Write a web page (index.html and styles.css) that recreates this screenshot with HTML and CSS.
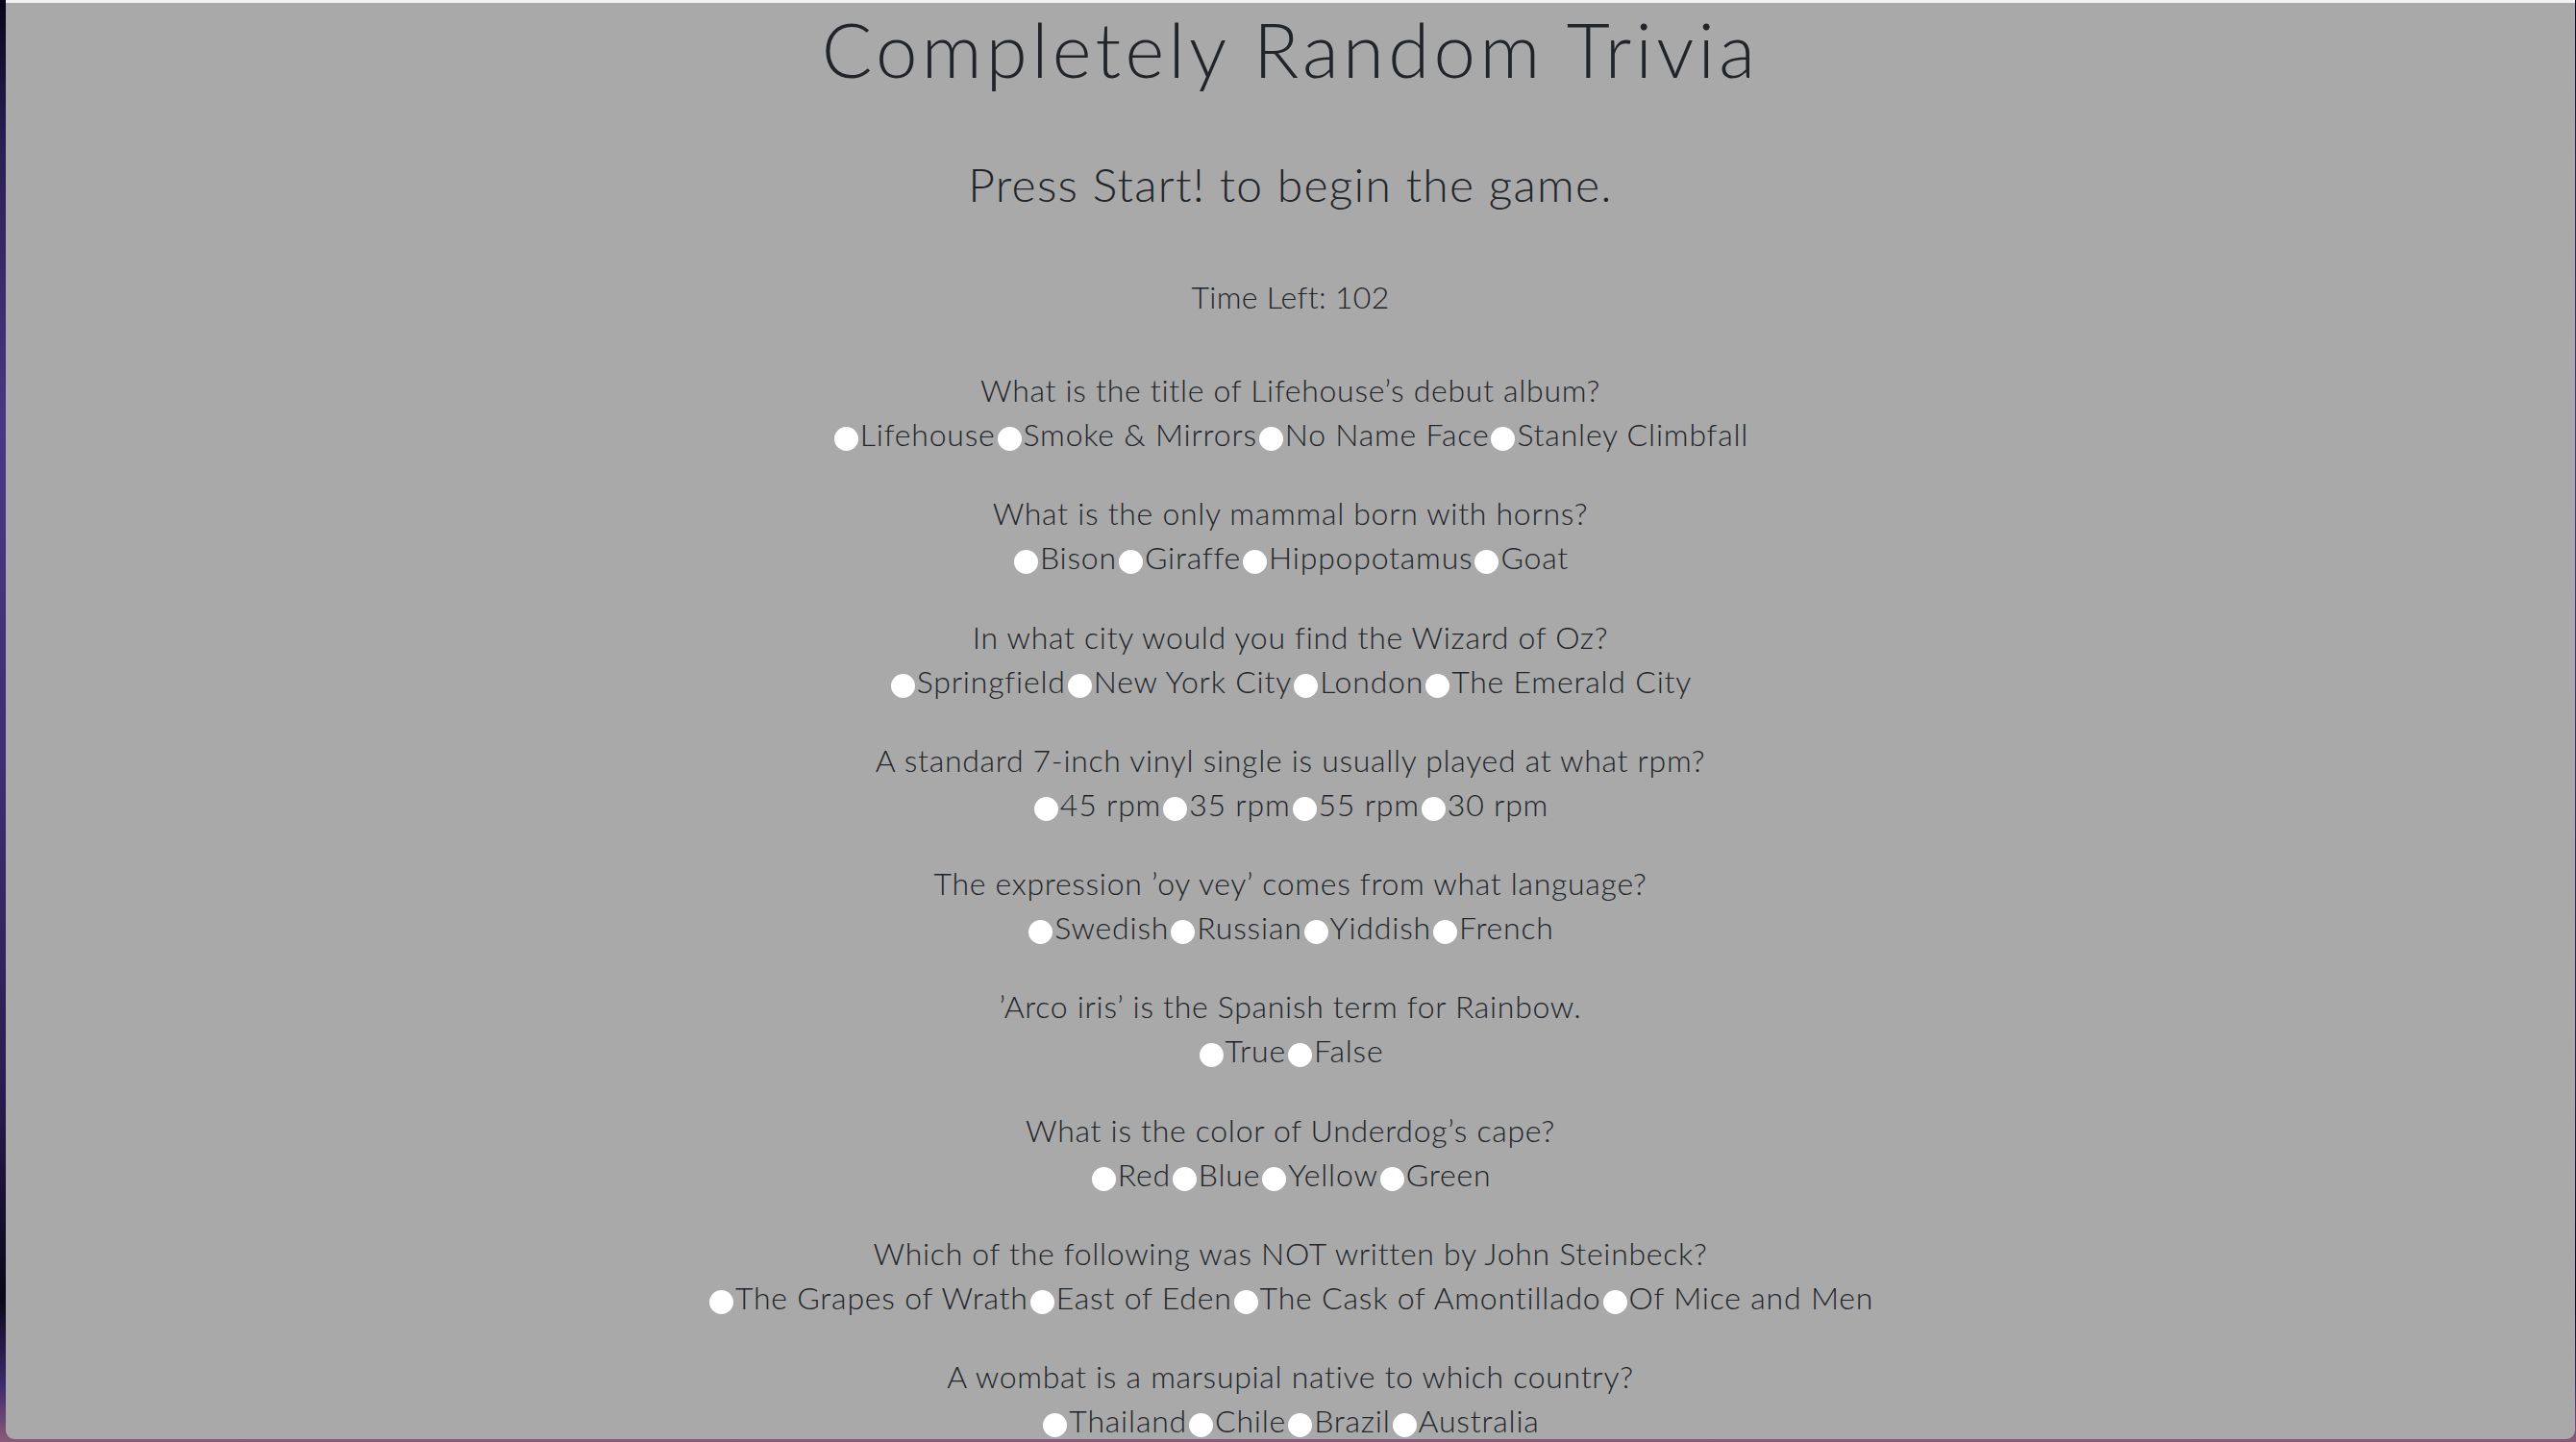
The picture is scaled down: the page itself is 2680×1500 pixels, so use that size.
FILE: index.html
```html
<!DOCTYPE html>
<html lang="en">
<head>
<meta charset="utf-8">
<title>Completely Random Trivia</title>
<link rel="stylesheet" href="styles.css">
</head>
<body>
<div class="backdrop">
  <main class="panel">
    <h1 class="title">Completely Random Trivia</h1>
    <h2 class="status">Press Start! to begin the game.</h2>
    <p class="timer">Time Left: 102</p>

    <div class="question">
      <p class="q-text">What is the title of Lifehouse’s debut album?</p>
      <div class="answers"><input type="radio" name="q1"><span>Lifehouse</span><input type="radio" name="q1"><span>Smoke &amp; Mirrors</span><input type="radio" name="q1"><span>No Name Face</span><input type="radio" name="q1"><span>Stanley Climbfall</span></div>
    </div>

    <div class="question">
      <p class="q-text">What is the only mammal born with horns?</p>
      <div class="answers"><input type="radio" name="q2"><span>Bison</span><input type="radio" name="q2"><span>Giraffe</span><input type="radio" name="q2"><span>Hippopotamus</span><input type="radio" name="q2"><span>Goat</span></div>
    </div>

    <div class="question">
      <p class="q-text">In what city would you find the Wizard of Oz?</p>
      <div class="answers"><input type="radio" name="q3"><span>Springfield</span><input type="radio" name="q3"><span>New York City</span><input type="radio" name="q3"><span>London</span><input type="radio" name="q3"><span>The Emerald City</span></div>
    </div>

    <div class="question">
      <p class="q-text">A standard 7-inch vinyl single is usually played at what rpm?</p>
      <div class="answers"><input type="radio" name="q4"><span>45 rpm</span><input type="radio" name="q4"><span>35 rpm</span><input type="radio" name="q4"><span>55 rpm</span><input type="radio" name="q4"><span>30 rpm</span></div>
    </div>

    <div class="question">
      <p class="q-text">The expression ’oy vey’ comes from what language?</p>
      <div class="answers"><input type="radio" name="q5"><span>Swedish</span><input type="radio" name="q5"><span>Russian</span><input type="radio" name="q5"><span>Yiddish</span><input type="radio" name="q5"><span>French</span></div>
    </div>

    <div class="question">
      <p class="q-text">’Arco iris’ is the Spanish term for Rainbow.</p>
      <div class="answers"><input type="radio" name="q6"><span>True</span><input type="radio" name="q6"><span>False</span></div>
    </div>

    <div class="question">
      <p class="q-text">What is the color of Underdog’s cape?</p>
      <div class="answers"><input type="radio" name="q7"><span>Red</span><input type="radio" name="q7"><span>Blue</span><input type="radio" name="q7"><span>Yellow</span><input type="radio" name="q7"><span>Green</span></div>
    </div>

    <div class="question">
      <p class="q-text">Which of the following was NOT written by John Steinbeck?</p>
      <div class="answers"><input type="radio" name="q8"><span>The Grapes of Wrath</span><input type="radio" name="q8"><span>East of Eden</span><input type="radio" name="q8"><span>The Cask of Amontillado</span><input type="radio" name="q8"><span>Of Mice and Men</span></div>
    </div>

    <div class="question">
      <p class="q-text">A wombat is a marsupial native to which country?</p>
      <div class="answers"><input type="radio" name="q9"><span>Thailand</span><input type="radio" name="q9"><span>Chile</span><input type="radio" name="q9"><span>Brazil</span><input type="radio" name="q9"><span>Australia</span></div>
    </div>
  </main>
</div>
</body>
</html>
```

FILE: styles.css
```css
html, body {
  margin: 0;
  padding: 0;
  height: 100%;
  overflow: hidden;
}

body {
  background: linear-gradient(180deg, #07061a 0%, #2a1f55 10%, #4a3784 30%, #3c2c70 55%, #2a1d52 75%, #0b0718 90%, #3b2a6c 96%, #8a5a7a 100%);
  font-family: "Lato", "Liberation Sans", sans-serif;
  color: #212529;
}

.backdrop {
  height: 1500px;
  padding: 0 1px 3px 6px;
  box-sizing: border-box;
}

.panel {
  height: 100%;
  background: #a9a9a9;
  border-top: 3px solid #f2f2f2;
  border-radius: 0 0 9px 9px;
  box-sizing: border-box;
  overflow: hidden;
  text-align: center;
}

.title {
  margin: 0;
  font-size: 78px;
  font-weight: 300;
  line-height: 96px;
  letter-spacing: 4.3px;
}

.status {
  margin: 63px 0 0;
  font-size: 48px;
  font-weight: 300;
  line-height: 60px;
  letter-spacing: 1.3px;
}

.timer {
  margin: 67px 0 0;
  font-size: 32px;
  font-weight: 300;
  line-height: 40px;
  letter-spacing: 0.3px;
}

.question {
  margin-top: 54px;
}

.question + .question {
  margin-top: 36.3px;
}

.q-text {
  margin: 0;
  font-size: 32px;
  font-weight: 300;
  line-height: 46px;
  letter-spacing: 0.7px;
}

.answers {
  font-size: 32px;
  font-weight: 300;
  line-height: 46px;
  letter-spacing: 0.8px;
  white-space: nowrap;
}

.answers input {
  appearance: none;
  -webkit-appearance: none;
  width: 25px;
  height: 25px;
  margin: 0 2px 0 2px;
  border-radius: 50%;
  background: #ffffff;
  border: none;
  vertical-align: -5px;
}
```
